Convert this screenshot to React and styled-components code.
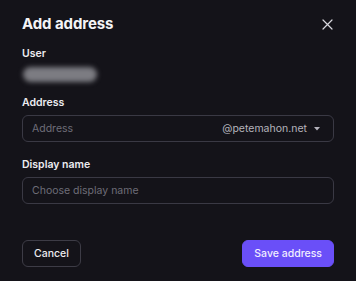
import React from "react";
import styled, { createGlobalStyle } from "styled-components";

const Global = createGlobalStyle`
  html, body { margin: 0; padding: 0; background: #141319; }
  body { font-family: Inter, "Noto Sans", sans-serif; }
  * { box-sizing: border-box; }
`;

const Dialog = styled.div`
  width: 356px;
  height: 281px;
  background: #141319;
  padding: 13px 22px 0 22px;
  display: flex;
  flex-direction: column;
  color: #f2f2f5;
`;

const Header = styled.div`
  display: flex;
  align-items: center;
  justify-content: space-between;
  height: 20px;
`;

const Title = styled.h2`
  margin: 0;
  font-size: 15px;
  line-height: 20px;
  font-weight: 700;
  letter-spacing: -0.1px;
  color: #f4f4f6;
  transform: translateY(1px);
`;

const CloseBtn = styled.button`
  background: none;
  border: 0;
  padding: 0;
  width: 13px;
  height: 13px;
  margin-top: 2px;
  display: flex;
  align-items: center;
  justify-content: center;
  color: #d8d8de;
  cursor: pointer;
`;

const Field = styled.div`
  display: flex;
  flex-direction: column;
  margin-top: ${(p) => p.$mt}px;
`;

const Label = styled.label`
  font-size: 10.5px;
  font-weight: 600;
  color: #ececf0;
  line-height: 13px;
`;

const Blurred = styled.div`
  margin-top: 7px;
  width: 74px;
  height: 15px;
  border-radius: 8px;
  background: #7c7c82;
  filter: blur(2.5px);
  margin-left: 1px;
`;

const InputBox = styled.div`
  margin-top: 6px;
  height: 27px;
  border: 1px solid #3a3944;
  border-radius: 6px;
  display: flex;
  align-items: center;
  padding: 0 13px 0 9px;
  font-size: 10.5px;
`;

const Placeholder = styled.span`
  flex: 1;
  color: #6e6d78;
`;

const Domain = styled.span`
  color: #b4b3bc;
  display: flex;
  align-items: center;
  gap: 7px;
`;

const Footer = styled.div`
  margin-top: auto;
  margin-bottom: 14px;
  display: flex;
  justify-content: space-between;
`;

const Button = styled.button`
  height: 27px;
  border-radius: 6px;
  font-family: inherit;
  font-size: 10.5px;
  font-weight: 500;
  padding: 0 ${(p) => (p.$primary ? 11 : 11)}px;
  border: 1px solid ${(p) => (p.$primary ? "#6a4ff8" : "#3d3c46")};
  background: ${(p) => (p.$primary ? "#6a4ff8" : "transparent")};
  color: ${(p) => (p.$primary ? "#f0edff" : "#ececf0")};
  cursor: pointer;
`;

export default function App() {
  return (
    <>
      <Global />
      <Dialog>
        <Header>
          <Title>Add address</Title>
          <CloseBtn aria-label="Close">
            <svg width="11" height="11" viewBox="0 0 11 11">
              <path d="M1 1L10 10M10 1L1 10" stroke="currentColor" strokeWidth="1.2" strokeLinecap="round" />
            </svg>
          </CloseBtn>
        </Header>
        <Field $mt={14}>
          <Label>User</Label>
          <Blurred />
        </Field>
        <Field $mt={14}>
          <Label>Address</Label>
          <InputBox>
            <Placeholder>Address</Placeholder>
            <Domain>
              @petemahon.net
              <svg width="6" height="4" viewBox="0 0 6 4">
                <path d="M0 0H6L3 3.5Z" fill="#b4b3bc" />
              </svg>
            </Domain>
          </InputBox>
        </Field>
        <Field $mt={16}>
          <Label>Display name</Label>
          <InputBox>
            <Placeholder>Choose display name</Placeholder>
          </InputBox>
        </Field>
        <Footer>
          <Button>Cancel</Button>
          <Button $primary>Save address</Button>
        </Footer>
      </Dialog>
    </>
  );
}
